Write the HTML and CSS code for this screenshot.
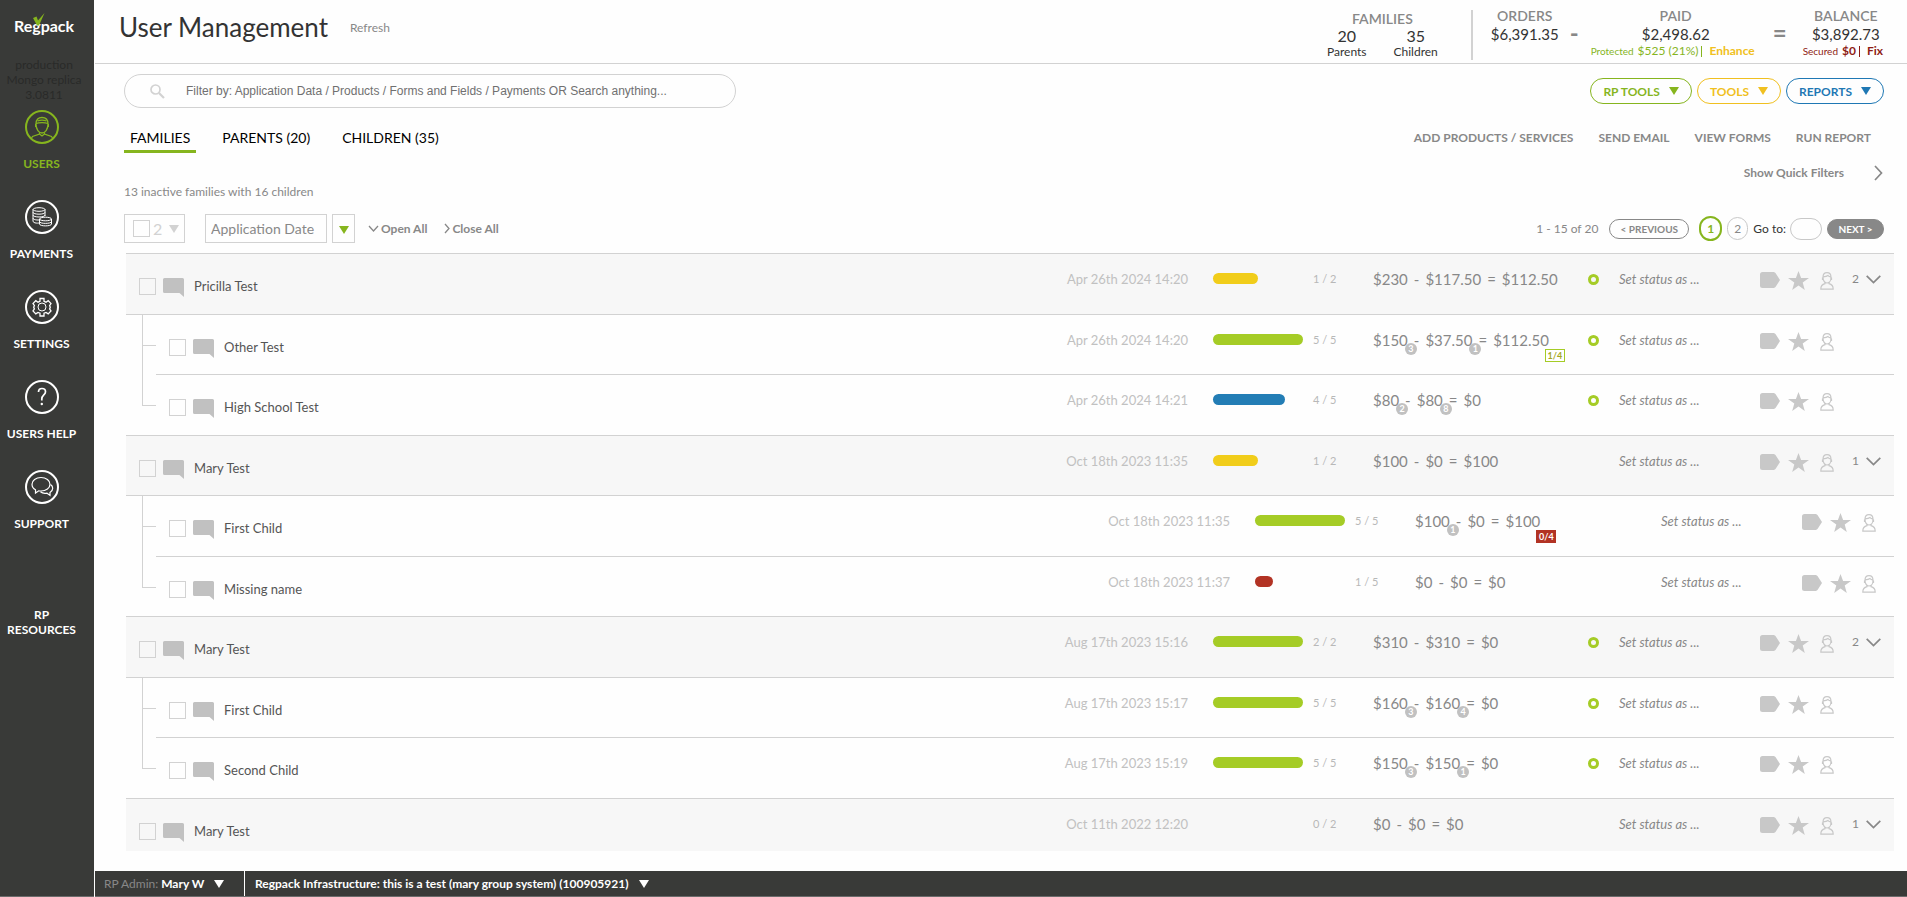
FILE: index.html
```html
<!DOCTYPE html>
<html lang="en">
<head>
	<meta charset="utf-8">
	<title>User Management</title>
	<link rel="stylesheet" href="styles.css">
</head>
<body>
	<svg class="sprite" aria-hidden="true">
		<symbol id="i-comment" viewBox="0 0 21 19">
			<path d="M1.5 0h18A1.5 1.5 0 0 1 21 1.5V19l-4.500-4H1.500A1.500 1.500 0 0 1 0 13.500v-12A1.500 1.500 0 0 1 1.500 0z" fill="#c1c1c1"/>
		</symbol>
		<symbol id="i-tag" viewBox="0 0 20 16">
			<path d="M2.500 0H14l1.500 1L20 8l-4.500 7-1.500 1H2.500A2.500 2.500 0 0 1 0 13.500v-11A2.500 2.500 0 0 1 2.500 0z" fill="#c8c8c8"/>
		</symbol>
		<symbol id="i-star" viewBox="0 0 21 19">
			<path d="M10.500 0l2.600 7H21l-6.300 4.600L16.800 19l-6.300-4.500L4.200 19l2.100-7.400L0 7h7.900z" fill="#c8c8c8"/>
		</symbol>
		<symbol id="i-person" viewBox="0 0 14 18">
			<g fill="none" stroke="#c8c8c8" stroke-width="1.200">
				<path d="M3 5.500C3 2.500 4.500.7 7 .7s4 1.800 4 4.800c0 3-1.700 5.500-4 5.500S3 8.500 3 5.500z"/>
				<path d="M3 4.800c2.500 0 4-.4 5-1.300.6.900 1.500 1.300 3 1.300M5 10v1.700c-2.800.7-4.200 2-4.200 5.500h12.400c0-3.500-1.400-4.800-4.200-5.500V10"/>
				<path d="M2.500 5.500v2.500M11.500 5.500v2.500"/>
			</g>
		</symbol>
		<symbol id="i-down" viewBox="0 0 15 9">
			<path d="M.7.800L7.500 7.600 14.300.800" fill="none" stroke="#888" stroke-width="1.700"/>
		</symbol>
	</svg>

	<nav class="sidebar">
		<a class="logo" href="#">Regpack<svg class="logoCheck" viewBox="0 0 12 13"><path d="M0 5l3.500-1.500L5 7.500 11.500 0 6 12.500H4z" fill="#86b51e"/></svg></a>
		<p class="version">production<br>Mongo replica<br>3.0811</p>
		<a class="navItem active" href="#">
			<svg class="navIcon" viewBox="0 0 34 34" fill="none" stroke="currentColor">
				<circle cx="17" cy="17" r="16" stroke-width="2"/>
				<path d="M11 14c0-4.500 2.300-6.500 6-6.500s6 2 6 6.500c0 5.500-3 9-6 9s-6-3.500-6-9z" stroke-width="1.300"/>
				<path d="M11 13.500c3-1.200 9-1.200 12 0M12.500 11c2.500-1 6.500-1 9 0M14.500 22.500v1.500L7.500 26.500 6 29M19.500 22.500v1.500l7 2.500L28 29M14.500 24l2.500 2 2.500-2" stroke-width="1.200"/>
				<path d="M10.500 14v3M23.500 14v3"/>
			</svg>
			<span>USERS</span>
		</a>
		<a class="navItem" href="#">
			<svg class="navIcon" viewBox="0 0 34 34" fill="none" stroke="currentColor">
				<circle cx="17" cy="17" r="16" stroke-width="2"/>
				<ellipse cx="14" cy="9.500" rx="6" ry="1.800"/>
				<path d="M8 9.500v11.500c0 2.500 6 2.500 7.500 1.500M20 9.500v6.500M8 12.300c0 2.500 12 2.500 12 0M8 15.100c0 2.500 12 2.500 12 0M8 18c0 2 5 2.300 7 1.800"/>
				<ellipse cx="20.500" cy="19" rx="6" ry="1.800"/>
				<path d="M14.500 19v5c0 2.500 12 2.500 12 0v-5M14.500 21.500c0 2.500 12 2.500 12 0"/>
			</svg>
			<span>PAYMENTS</span>
		</a>
		<a class="navItem" href="#">
			<svg class="navIcon" viewBox="0 0 34 34" fill="none" stroke="currentColor">
				<circle cx="17" cy="17" r="16" stroke-width="2"/>
				<circle cx="17" cy="17" r="4"/>
				<path d="M15 8.500h4v2.800l2 .9 2.200-1.600 2.800 3-1.400 2 .7 1.600-.7 1.700 1.400 2.100-2.800 2.900-2.200-1.500-2 .8v2.800h-4v-2.800l-2-.8-2.200 1.500L8 21l1.400-2.100-.7-1.700.7-1.600-1.400-2 2.800-3 2.200 1.600 2-.9z" stroke-width="1.300"/>
			</svg>
			<span>SETTINGS</span>
		</a>
		<a class="navItem" href="#">
			<svg class="navIcon" viewBox="0 0 34 34" fill="none" stroke="currentColor">
				<circle cx="17" cy="17" r="16" stroke-width="2"/>
				<path d="M13.500 12c0-2.500 1.500-3.500 3.500-3.500s3.500 1.200 3.500 3.200c0 3.300-3.700 3.300-3.700 7.300v1.500" stroke-width="1.700"/>
				<circle cx="16.800" cy="24" r="1.200" fill="currentColor" stroke="none"/>
			</svg>
			<span>USERS HELP</span>
		</a>
		<a class="navItem" href="#">
			<svg class="navIcon" viewBox="0 0 34 34" fill="none" stroke="currentColor">
				<circle cx="17" cy="17" r="16" stroke-width="2"/>
				<path d="M16 7.500c5.200 0 9 3 9 6.700s-3.800 6.800-9 6.800c-.8 0-1.600 0-2.300-.2L10.500 23v-3.200C8.300 18.600 7 16.600 7 14.200c0-3.700 3.800-6.700 9-6.700z" stroke-width="1.200"/>
				<path d="M25.500 14.500c1.500 1 2.200 2.300 2.200 3.700 0 1.800-1 3.200-2.700 4.200v3l-3-2.200c-2.800.5-5 0-6.500-1.400" stroke-width="1.200"/>
			</svg>
			<span>SUPPORT</span>
		</a>
		<a class="navItem noIcon" href="#"><span>RP RESOURCES</span></a>
	</nav>

	<div class="main">
		<header class="header">
			<h1>User Management</h1>
			<a class="refresh" href="#">Refresh</a>
			<div class="stats">
				<div class="families">
					<div class="statTitle">FAMILIES</div>
					<div class="familyCounts">
						<div><b>20</b>Parents</div>
						<div><b>35</b>Children</div>
					</div>
				</div>
				<div class="stat orders">
					<div class="statTitle">ORDERS</div>
					<div class="statValue">$6,391.35</div>
				</div>
				<div class="sign minus">-</div>
				<div class="stat paid">
					<div class="statTitle">PAID</div>
					<div class="statValue">$2,498.62</div>
					<div class="statNote green"><small>Protected</small><span>$525 (21%)</span><i></i><a class="yellow" href="#">Enhance</a></div>
				</div>
				<div class="sign equals">=</div>
				<div class="stat balance">
					<div class="statTitle">BALANCE</div>
					<div class="statValue">$3,892.73</div>
					<div class="statNote red"><small>Secured</small><strong>$0</strong><i></i><a href="#">Fix</a></div>
				</div>
			</div>
		</header>

		<div class="searchRow">
			<div class="searchBox">
				<svg class="searchIcon" viewBox="0 0 15 15" fill="none" stroke="#d2d2d2"><circle cx="5.500" cy="5.500" r="4.500" stroke-width="1.700"/><path d="M9 9l5 5" stroke-width="2.200"/></svg>
				<input type="text" aria-label="Search" placeholder="Filter by: Application Data / Products / Forms and Fields / Payments OR Search anything...">
			</div>
			<div class="toolButtons">
				<button class="tool green">RP TOOLS<i class="caret"></i></button>
				<button class="tool yellow">TOOLS<i class="caret"></i></button>
				<button class="tool blue">REPORTS<i class="caret"></i></button>
			</div>
		</div>

		<div class="tabRow">
			<div class="tabs">
				<a class="tab active" href="#">FAMILIES</a>
				<a class="tab" href="#">PARENTS (20)</a>
				<a class="tab" href="#">CHILDREN (35)</a>
			</div>
			<div class="actions">
				<a href="#">ADD PRODUCTS / SERVICES</a>
				<a href="#">SEND EMAIL</a>
				<a href="#">VIEW FORMS</a>
				<a href="#">RUN REPORT</a>
			</div>
		</div>

		<button class="quickFilters">Show Quick Filters
			<svg width="9" height="16" viewBox="0 0 9 16"><path d="M1 1l6.500 7L1 15" fill="none" stroke="#888" stroke-width="1.700"/></svg>
		</button>
		<p class="inactive">13 inactive families with 16 children</p>

		<div class="controls">
			<div class="selectAll">
				<input class="check" type="checkbox" aria-label="Select all">
				<span>2</span><i class="caret"></i>
			</div>
			<select class="sortBy" aria-label="Sort by">
				<option>Application Date</option>
			</select>
			<button class="sortDir" aria-label="Sort direction"><i class="caret"></i></button>
			<button class="toggle"><svg width="11" height="7" viewBox="0 0 11 7"><path d="M1 1l4.500 5L10 1" fill="none" stroke="#888" stroke-width="1.300"/></svg>Open All</button>
			<button class="toggle"><svg width="6" height="11" viewBox="0 0 6 11"><path d="M1 1l4 4.500L1 10" fill="none" stroke="#888" stroke-width="1.300"/></svg>Close All</button>
			<div class="pager">
				<span class="range">1 - 15 of 20</span>
				<button class="prev">&lt; PREVIOUS</button>
				<button class="page current">1</button>
				<button class="page">2</button>
				<label for="goto">Go to:</label>
				<input id="goto" type="text">
				<button class="next">NEXT &gt;</button>
			</div>
		</div>

		<div class="listWrap">
			<table class="list">
				<tbody id="users"></tbody>
			</table>
		</div>

		<footer class="footer">
			<div class="admin"><span>RP Admin:</span> Mary W<i class="caret"></i></div>
			<div class="project">Regpack Infrastructure: this is a test (mary group system) (100905921)<i class="caret"></i></div>
		</footer>
	</div>

	<script type="text/javascript">
		// sums: [amount, badge] for ordered, paid, balance
		let users = [
			{name: 'Pricilla Test', date: 'Apr 26th 2024 14:20', done: 1, total: 2, color: 'yellow', sums: [['$230'], ['$117.50'], ['$112.50']], ring: true, kids: 2},
			{name: 'Other Test', child: true, date: 'Apr 26th 2024 14:20', done: 5, total: 5, color: 'green', sums: [['$150', 3], ['$37.50', 1], ['$112.50']], plan: '1/4', ring: true},
			{name: 'High School Test', child: true, last: true, date: 'Apr 26th 2024 14:21', done: 4, total: 5, color: 'blue', sums: [['$80', 2], ['$80', 8], ['$0']], ring: true},
			{name: 'Mary Test', date: 'Oct 18th 2023 11:35', done: 1, total: 2, color: 'yellow', sums: [['$100'], ['$0'], ['$100']], kids: 1},
			{name: 'First Child', child: true, wide: true, date: 'Oct 18th 2023 11:35', done: 5, total: 5, color: 'green', sums: [['$100', 1], ['$0'], ['$100']], plan: '0/4', late: true},
			{name: 'Missing name', child: true, last: true, wide: true, date: 'Oct 18th 2023 11:37', done: 1, total: 5, color: 'red', sums: [['$0'], ['$0'], ['$0']]},
			{name: 'Mary Test', date: 'Aug 17th 2023 15:16', done: 2, total: 2, color: 'green', sums: [['$310'], ['$310'], ['$0']], ring: true, kids: 2},
			{name: 'First Child', child: true, date: 'Aug 17th 2023 15:17', done: 5, total: 5, color: 'green', sums: [['$160', 3], ['$160', 4], ['$0']], ring: true},
			{name: 'Second Child', child: true, last: true, date: 'Aug 17th 2023 15:19', done: 5, total: 5, color: 'green', sums: [['$150', 3], ['$150', 1], ['$0']], ring: true},
			{name: 'Mary Test', date: 'Oct 11th 2022 12:20', done: 0, total: 2, color: 'yellow', sums: [['$0'], ['$0'], ['$0']], kids: 1}
		];

		function icon(name) {
			return '<svg class="'+name+'"><use href="#i-'+name+'"/></svg>';
		}

		function amount(sum) {
			return '<span class="amount">'+sum[0]+(sum[1] ? '<b class="badge">'+sum[1]+'</b>' : '')+'</span>';
		}

		function rowHtml(user, id) {
			let plan = user.plan ? '<b class="plan'+(user.late ? ' late' : '')+'">'+user.plan+'</b>' : '';
			let balance = '<span class="amount">'+user.sums[2][0]+plan+'</span>';
			let html = '';
			if (user.child) {
				html += '<td class="tree"></td>';
			}
			html += '<td class="name"><input class="check" type="checkbox" id="u_'+id+'">'+icon('comment')+'<label for="u_'+id+'">'+user.name+'</label></td>';
			html += '<td class="date">'+user.date+'</td>';
			html += '<td class="progress"><div class="bar '+user.color+'" style="width:'+(user.done / user.total * 100)+'%"></div></td>';
			html += '<td class="steps">'+user.done+' / '+user.total+'</td>';
			html += '<td class="sums">'+amount(user.sums[0])+'<span>-</span>'+amount(user.sums[1])+'<span>=</span>'+balance+'</td>';
			html += '<td class="mark">'+(user.ring ? '<span class="ring"></span>' : '')+'</td>';
			html += '<td class="status">Set status as ...</td>';
			html += '<td class="icons">'+icon('tag')+icon('star')+icon('person')+'</td>';
			if (!user.wide) {
				html += '<td class="kids">'+(user.kids ? user.kids+icon('down') : '')+'</td>';
			}
			return html;
		}

		let content = document.querySelector('#users');
		users.forEach(function(user, id){
			let row = document.createElement('tr');
			row.className = user.child ? 'child' : 'parent';
			if (user.last) {
				row.className += ' last';
			}
			row.innerHTML = rowHtml(user, id);
			content.appendChild(row);
		});
	</script>
</body>
</html>
```

FILE: styles.css
```css
* {
	box-sizing: border-box;
}
html, body {
	margin: 0;
	height: 100%;
}
body {
	display: flex;
	background: #fefefe;
	color: #888;
	font-family: Lato, sans-serif;
	font-size: 12px;
	overflow: hidden;
}
a {
	color: inherit;
	text-decoration: none;
}
button, input, select {
	font-family: inherit;
	font-size: inherit;
	color: inherit;
	background: none;
	border: none;
	padding: 0;
	margin: 0;
	outline: none;
}
p {
	margin: 0;
}
svg {
	display: block;
	flex: none;
}
.sprite {
	display: none;
}
.caret {
	display: inline-block;
	border: 5px solid transparent;
	border-top: 8px solid currentColor;
	border-bottom: none;
}
.check {
	appearance: none;
	width: 17px;
	height: 17px;
	border: 1px solid #d2d2d2;
}

/* sidebar */
.sidebar {
	flex: none;
	width: 94px;
	padding: 11px 11px 0 0;
	background: #393a38;
	border-bottom: 1px solid #6b6b6b;
	color: #fff;
	text-align: center;
}
.logo {
	position: relative;
	display: block;
	width: 62px;
	margin-left: 13px;
	line-height: 30px;
	font-size: 16px;
	font-weight: 700;
}
.logoCheck {
	position: absolute;
	left: 20px;
	top: 2px;
	width: 12px;
	height: 13px;
}
.version {
	margin: 16px 0 0 5px;
	color: #292a29;
	font-size: 12px;
	line-height: 15px;
	white-space: nowrap;
}
.navItem {
	display: block;
	height: 90px;
	padding-top: 8px;
	font-weight: 700;
	line-height: 15px;
}
.navIcon {
	width: 34px;
	height: 34px;
	margin: 0 auto 12px;
}
.navItem.active {
	color: #86b51e;
}
.navItem.noIcon {
	padding-top: 55px;
}

.main {
	flex: 1;
	min-width: 0;
	display: flex;
	flex-direction: column;
	margin-left: 1px;
}

/* header */
.header {
	display: flex;
	height: 64px;
	padding: 0 24px 0 24px;
	border-bottom: 1px solid #d2d2d2;
}
h1 {
	margin: 0;
	color: #333;
	font-size: 26px;
	font-weight: 400;
	line-height: 54px;
}
.refresh {
	margin-left: 22px;
	line-height: 56px;
}
.stats {
	display: flex;
	margin-left: auto;
	text-align: center;
	color: #333;
}
.statTitle {
	color: #888;
	font-size: 14px;
	font-weight: 600;
	line-height: 18px;
}
.statValue {
	font-size: 15px;
	line-height: 18px;
}
.families {
	height: 50px;
	margin-top: 10px;
	padding-right: 33px;
	border-right: 2px solid #d2d2d2;
}
.familyCounts {
	display: flex;
	gap: 27px;
}
.familyCounts b {
	display: block;
	font-size: 16px;
	font-weight: 400;
	line-height: 16px;
}
.stat {
	padding-top: 7px;
}
.orders {
	margin-left: 18px;
}
.sign {
	font-size: 24px;
	font-weight: 700;
	line-height: 66px;
	color: #888;
}
.minus {
	margin: 0 18px 0 11px;
}
.equals {
	margin: 0 22px 0 18px;
}
.statNote {
	display: flex;
	align-items: baseline;
	margin-left: -6px;
	line-height: 16px;
}
.statNote small {
	margin-right: 4px;
	font-size: 10px;
}
.statNote i {
	align-self: center;
	width: 1px;
	height: 11px;
	margin: 0 7px 0 3px;
	background: currentColor;
}
.statNote a {
	font-weight: 700;
}
.green {
	color: #86b51e;
}
.yellow {
	color: #f0c020;
}
.blue {
	color: #1f78b4;
}
.red {
	color: #8e1c14;
}

/* search and tools */
.searchRow {
	display: flex;
	justify-content: space-between;
	align-items: center;
	padding: 10px 23px 0 29px;
}
.searchBox {
	display: flex;
	align-items: center;
	width: 612px;
	height: 34px;
	padding: 0 25px;
	border: 1px solid #d2d2d2;
	border-radius: 17px;
}
.searchIcon {
	width: 15px;
	height: 15px;
}
.searchBox input {
	flex: 1;
	margin-left: 21px;
	font-family: "Liberation Sans", Arial, sans-serif;
	font-size: 12px;
}
.searchBox input::placeholder {
	color: #707070;
}
.toolButtons {
	display: flex;
	gap: 5px;
}
.tool {
	display: flex;
	align-items: center;
	gap: 9px;
	height: 26px;
	padding: 0 12px;
	border: 1px solid currentColor;
	border-radius: 13px;
	font-weight: 700;
}

/* tabs */
.tabRow {
	display: flex;
	justify-content: space-between;
	padding: 17px 36px 0 29px;
}
.tabs {
	display: flex;
	gap: 20px;
}
.tab {
	padding: 0 6px;
	color: #000;
	font-size: 14px;
	line-height: 25px;
}
.tab.active {
	border-bottom: 3px solid #86b51e;
}
.actions {
	display: flex;
	gap: 25px;
	font-weight: 700;
	line-height: 26px;
}
.quickFilters {
	display: flex;
	align-items: center;
	align-self: flex-end;
	gap: 30px;
	margin: 12px 24px 0 0;
	font-weight: 700;
	line-height: 16px;
}
.inactive {
	margin: 3px 0 0 29px;
	line-height: 16px;
}

/* controls above the list */
.controls {
	display: flex;
	align-items: center;
	padding: 14px 23px 10px 29px;
}
.selectAll {
	display: flex;
	align-items: center;
	width: 61px;
	height: 29px;
	padding-left: 8px;
	border: 1px solid #d2d2d2;
	color: #d2d2d2;
	font-size: 16px;
}
.selectAll span {
	margin: 0 7px 0 3px;
}
.sortBy {
	appearance: none;
	width: 122px;
	height: 29px;
	margin-left: 20px;
	padding-left: 5px;
	border: 1px solid #d2d2d2;
	font-size: 14px;
}
.sortDir {
	width: 23px;
	height: 29px;
	margin: 0 13px 0 5px;
	border: 1px solid #d2d2d2;
	color: #86b51e;
}
.sortDir .caret {
	vertical-align: middle;
}
.toggle {
	display: flex;
	align-items: center;
	gap: 2px;
	margin-right: 17px;
	font-weight: 700;
}
.pager {
	display: flex;
	align-items: center;
	margin-left: auto;
}
.prev, .next {
	height: 20px;
	border: 1px solid #888;
	border-radius: 10px;
	font-size: 10px;
	font-weight: 700;
}
.prev {
	width: 80px;
	margin: 0 10px 0 11px;
}
.next {
	width: 57px;
	background: #888;
	color: #fff;
}
.page {
	width: 21px;
	height: 23px;
	margin-right: 5px;
	border: 1px solid #c8c8c8;
	border-radius: 11px;
}
.page.current {
	width: 23px;
	height: 25px;
	border: 2px solid #86b51e;
	border-radius: 12px;
	color: #86b51e;
	font-weight: 700;
}
.pager label {
	color: #333;
}
.pager input {
	width: 32px;
	height: 22px;
	margin: 0 5px 0 4px;
	border: 1px solid #c8c8c8;
	border-radius: 11px;
}

/* families list */
.listWrap {
	flex: 1;
	min-height: 0;
	overflow: hidden;
	margin: 0 13px 20px 31px;
	border-top: 1px solid #d2d2d2;
}
.list, .list tbody {
	display: block;
}
.list tr {
	display: flex;
	height: 60px;
}
.list tr:nth-child(2n+1) {
	height: 61px;
}
.list .parent {
	background: #f7f7f7;
}
.list td {
	flex: none;
	padding: 15px 0 0;
	border-bottom: 1px solid #d2d2d2;
	line-height: 20px;
}
.list .tree {
	position: relative;
	width: 30px;
	padding: 0;
	border-bottom-color: transparent;
}
.last .tree {
	border-bottom-color: #d2d2d2;
}
.tree::before {
	content: "";
	position: absolute;
	left: 16px;
	right: 0;
	top: 0;
	height: 30px;
	border-left: 1px solid #d2d2d2;
	border-bottom: 1px solid #d2d2d2;
}
.tree::after {
	content: "";
	position: absolute;
	left: 16px;
	top: 30px;
	bottom: -1px;
	border-left: 1px solid #d2d2d2;
}
.last .tree::after {
	display: none;
}
.list .name {
	flex: 1;
	display: flex;
	align-items: flex-start;
	padding: 24px 0 0 13px;
	color: #555;
	font-size: 13px;
}
.name label {
	margin: -2px 0 0 10px;
}
.comment {
	width: 21px;
	height: 19px;
	margin-left: 7px;
}
.date {
	width: 140px;
	margin: 0;
	text-align: right;
	color: #c1c1c1;
	font-size: 13px;
}
.list .progress {
	width: 125px;
	padding: 19px 10px 0 25px;
}
.bar {
	height: 11px;
	border-radius: 6px;
}
.bar.yellow {
	background: #f1cd1a;
}
.bar.green {
	background: #a5cc26;
}
.bar.blue {
	background: #237db5;
}
.bar.red {
	background: #b23324;
}
.steps {
	width: 60px;
	color: #b8b8b8;
	font-size: 11px;
}
.list .sums {
	display: flex;
	gap: 6px;
	width: 215px;
	font-size: 15px;
}
.amount {
	position: relative;
}
.badge {
	position: absolute;
	right: -9px;
	top: 13px;
	width: 12px;
	height: 12px;
	border-radius: 6px;
	background: #c1c1c1;
	color: #fff;
	font-size: 9px;
	line-height: 12px;
	text-align: center;
}
.plan {
	position: absolute;
	right: -16px;
	top: 19px;
	width: 20px;
	height: 13px;
	border: 1px solid #a5cc26;
	background: #fff;
	color: #a5a81e;
	font-size: 9px;
	line-height: 11px;
	text-align: center;
}
.plan.late {
	border-color: #b23324;
	background: #b23324;
	color: #fff;
}
.list .mark {
	width: 31px;
	padding-top: 20px;
}
.ring {
	display: block;
	width: 11px;
	height: 11px;
	border: 3px solid #a5cc26;
	border-radius: 6px;
}
.status {
	width: 141px;
	font-size: 13px;
	font-style: italic;
}
.list .icons {
	display: flex;
	align-items: flex-start;
	width: 92px;
	padding-top: 17px;
}
.tag {
	width: 20px;
	height: 16px;
	margin-top: 1px;
}
.star {
	width: 21px;
	height: 19px;
	margin: 0 11px 0 8px;
}
.person {
	width: 14px;
	height: 18px;
	margin-top: 1px;
}
.kids {
	display: flex;
	gap: 7px;
	width: 42px;
}
.down {
	width: 15px;
	height: 9px;
	margin-top: 6px;
}

/* footer */
.footer {
	display: flex;
	height: 26px;
	background: #393a38;
	border-bottom: 1px solid #6b6b6b;
	color: #fff;
	font-weight: 700;
	line-height: 26px;
}
.footer .caret {
	margin-left: 10px;
}
.admin {
	width: 150px;
	padding-left: 9px;
	border-right: 1px solid #fff;
}
.admin span {
	color: #888;
	font-weight: 400;
}
.project {
	padding-left: 10px;
}
```
